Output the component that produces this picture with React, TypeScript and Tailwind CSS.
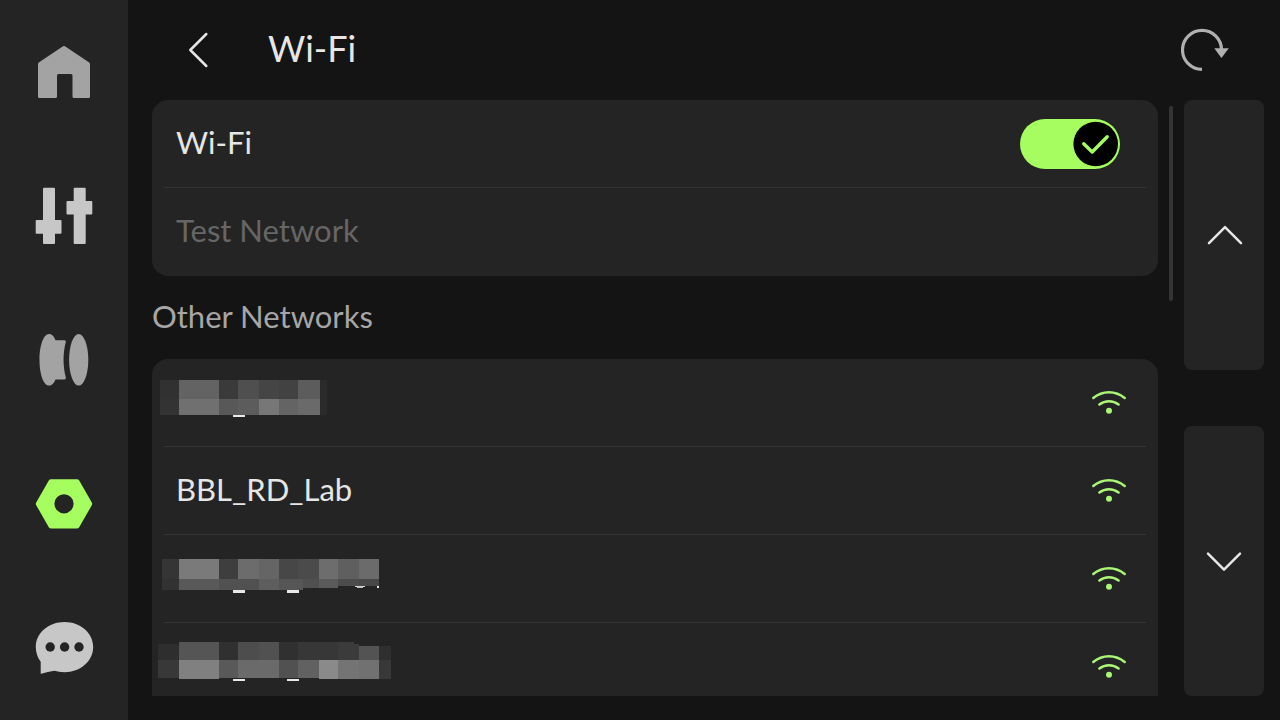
import { useState, type ReactNode } from "react";

type Block = [x: number, y: number, w: number, h: number, fill: string];

type Network = { id: string; name?: string; blocks?: Block[] };

const networks: Network[] = [
  {
    id: "n1",
    blocks: [
      [8, 21, 19, 19, "#313131"], [27, 21, 40, 19, "#636363"], [67, 21, 19, 19, "#3a3a3a"],
      [86, 21, 21, 19, "#4f4f4f"], [107, 21, 20, 19, "#454545"], [127, 21, 19, 19, "#424242"],
      [146, 21, 22, 19, "#5c5c5c"], [168, 21, 7, 35, "#2b2b2b"],
      [8, 40, 19, 16, "#333333"], [27, 40, 40, 16, "#707070"], [67, 40, 19, 16, "#585858"],
      [86, 40, 21, 16, "#5c5c5c"], [107, 40, 20, 16, "#777777"], [127, 40, 19, 16, "#646464"],
      [146, 40, 22, 16, "#6a6a6a"], [81, 56, 12, 2, "#e8e8e8"],
    ],
  },
  { id: "n2", name: "BBL_RD_Lab" },
  {
    id: "n3",
    blocks: [
      [10, 24, 17, 20, "#353535"], [27, 24, 40, 20, "#7a7a7a"], [67, 24, 19, 20, "#3e3e3e"],
      [86, 24, 21, 20, "#6c6c6c"], [107, 24, 20, 20, "#656565"], [127, 24, 19, 20, "#474747"],
      [146, 24, 21, 20, "#4b4b4b"], [167, 24, 19, 20, "#6d6d6d"], [186, 24, 21, 20, "#5f5f5f"],
      [207, 24, 20, 20, "#6b6b6b"],
      [10, 44, 17, 11, "#323232"], [27, 44, 40, 11, "#595959"], [67, 44, 40, 11, "#515151"],
      [107, 44, 20, 11, "#5e5e5e"], [127, 44, 24, 11, "#565656"], [151, 44, 16, 9, "#505050"],
      [167, 44, 19, 9, "#5a5a5a"], [186, 44, 21, 7, "#4c4c4c"], [207, 44, 20, 7, "#484848"],
      [81, 55, 12, 3, "#e8e8e8"], [135, 55, 12, 3, "#e8e8e8"], [203, 51, 10, 1, "#d6d6d6"],
      [205, 52, 6, 1, "#bdbdbd"], [225, 51, 2, 2, "#e8e8e8"],
    ],
  },
  {
    id: "n4",
    blocks: [
      [6, 21, 21, 16, "#2e2e2e"], [27, 19, 40, 18, "#555555"], [67, 19, 19, 18, "#303030"],
      [86, 19, 21, 18, "#4d4d4d"], [107, 19, 20, 18, "#515151"], [127, 19, 19, 18, "#303030"],
      [146, 19, 40, 18, "#373737"], [186, 19, 16, 18, "#3b3b3b"], [202, 21, 5, 16, "#3b3b3b"],
      [207, 23, 20, 14, "#535353"], [227, 23, 12, 14, "#2f2f2f"],
      [6, 37, 21, 18, "#383838"], [27, 37, 40, 19, "#808080"], [67, 37, 19, 18, "#595959"],
      [86, 37, 41, 18, "#6a6a6a"], [127, 37, 19, 18, "#515151"], [146, 37, 21, 18, "#616161"],
      [167, 37, 19, 19, "#8a8a8a"], [186, 37, 21, 19, "#747474"], [207, 37, 20, 19, "#717171"],
      [227, 37, 12, 19, "#383838"],
      [81, 56, 12, 2, "#e8e8e8"], [135, 56, 12, 2, "#e8e8e8"],
    ],
  },
];

function HomeIcon() {
  return (
    <svg className="size-16" viewBox="0 0 64 64" fill="#a3a3a3" aria-hidden="true">
      <path d="M31 6.2a2 2 0 0 1 2 0L57.200 22.600Q58 23.200 58 24.500V56.500a1.500 1.500 0 0 1-1.500 1.500H42a1.500 1.500 0 0 1-1.500-1.500V35.500a1.500 1.500 0 0 0-1.500-1.500H26.500a1.500 1.500 0 0 0-1.500 1.500V56.500a1.500 1.500 0 0 1-1.500 1.500H7.500a1.500 1.500 0 0 1-1.500-1.500V24.500Q6 23.200 6.800 22.600Z" />
    </svg>
  );
}

function SlidersIcon() {
  return (
    <svg className="size-16" viewBox="0 0 64 64" fill="#c7c7c7" aria-hidden="true">
      <rect x="11" y="3.800" width="12" height="56.200" rx="1" />
      <rect x="3.700" y="36" width="25.800" height="13.800" rx="1" />
      <rect x="41.700" y="3.800" width="12" height="56.200" rx="1" />
      <rect x="34.500" y="17" width="25.800" height="13.500" rx="1" />
    </svg>
  );
}

function SpoolIcon() {
  return (
    <svg className="size-16" viewBox="0 0 64 64" fill="#a3a3a3" aria-hidden="true">
      <ellipse cx="46.700" cy="31.800" rx="9.600" ry="25.800" />
      <path d="M17 6C20 6 22 8.500 23.500 12.200H32.500Q34.300 12.200 33.800 14C30.800 25 30.800 38.500 33.800 49.500Q34.300 51.500 32.500 51.500H23.500C22 55 20 57.600 17 57.600C11.500 57.600 7.500 46 7.500 31.800S11.500 6 17 6Z" />
    </svg>
  );
}

function SettingsIcon() {
  return (
    <svg className="size-16" viewBox="0 0 64 64" fill="#a5fd60" aria-hidden="true">
      <path
        fillRule="evenodd"
        d="M19 7.200H45Q46.400 7.200 47.200 8.500L59.800 30.500Q60.600 31.800 59.800 33.200L47.200 55.200Q46.400 56.500 45 56.500H19Q17.600 56.500 16.800 55.200L4.200 33.200Q3.400 31.800 4.200 30.500L16.800 8.500Q17.600 7.200 19 7.200ZM32 22.200a9.600 9.600 0 1 0 0 19.200a9.600 9.600 0 1 0 0-19.200Z"
      />
    </svg>
  );
}

function ChatIcon() {
  return (
    <svg className="size-16" viewBox="0 0 64 64" aria-hidden="true">
      <path
        fill="#c7c7c7"
        d="M32.500 6C48.500 6 61.200 17 61.200 31C61.200 45 48.500 56.200 32.500 56.200C28.500 56.200 25.500 55.600 22.500 54.800C18 55.400 13.500 56.500 9.200 57.700Q8.700 57.800 8.700 57.200V45.800C5.500 41.500 3.800 36.500 3.800 31C3.800 17 16.500 6 32.500 6Z"
      />
      <g fill="#242424">
        <circle cx="18.200" cy="31" r="4.700" />
        <circle cx="32.600" cy="31" r="4.700" />
        <circle cx="47" cy="31" r="4.700" />
      </g>
    </svg>
  );
}

function RefreshIcon() {
  return (
    <svg className="h-12 w-12" viewBox="0 0 48 48" aria-hidden="true">
      <path d="M21 43.400A19.500 19.500 0 1 1 40.500 24" fill="none" stroke="#b0b0b0" strokeWidth="3.200" />
      <path d="M33.300 22.300H47.800L40.800 31.600Q40.400 32 40 31.600Z" fill="#b0b0b0" />
    </svg>
  );
}

function WifiIcon() {
  return (
    <svg className="h-8 w-9" viewBox="0 0 36 32" fill="none" stroke="#aaf577" strokeWidth="2.500" strokeLinecap="round" aria-hidden="true">
      <path d="M2.300 11C11.500 3.200 24.500 3.200 33.700 11" />
      <path d="M8.400 17.500C14 13 22 13 27.600 17.500" />
      <circle cx="18" cy="23.800" r="3" fill="#aaf577" stroke="none" />
    </svg>
  );
}

function Mosaic({ blocks }: { blocks: Block[] }) {
  return (
    <svg className="-ml-3 h-[88px] w-[250px]" viewBox="0 0 250 88" shapeRendering="crispEdges" aria-hidden="true">
      {blocks.map(([x, y, w, h, fill]) => (
        <rect key={`${x}-${y}`} x={x} y={y} width={w} height={h} fill={fill} />
      ))}
    </svg>
  );
}

const navItems: { label: string; icon: ReactNode }[] = [
  { label: "Home", icon: <HomeIcon /> },
  { label: "Controls", icon: <SlidersIcon /> },
  { label: "Filament", icon: <SpoolIcon /> },
  { label: "Settings", icon: <SettingsIcon /> },
  { label: "Messages", icon: <ChatIcon /> },
];

export default function App() {
  const [enabled, setEnabled] = useState(true);

  return (
    <div className="flex h-screen bg-[#141414] font-['Lato','Noto_Sans',sans-serif] text-[31px] leading-10 text-[#e6e6e6]">
      <nav className="flex w-32 shrink-0 flex-col bg-[#242424]">
        {navItems.map((item) => (
          <button key={item.label} type="button" aria-label={item.label} className="flex flex-1 items-center justify-center">
            {item.icon}
          </button>
        ))}
      </nav>

      <main className="flex min-w-0 flex-1 flex-col">
        <header className="flex h-[100px] shrink-0 items-center pr-[51px] pl-12">
          <button type="button" aria-label="Back" className="flex size-12 items-center justify-center">
            <svg className="h-10 w-6" viewBox="0 0 24 40" fill="none" stroke="#e6e6e6" strokeWidth="2.500" strokeLinecap="round" strokeLinejoin="round" aria-hidden="true">
              <path d="M18.300 4L2.300 20L18.300 36" />
            </svg>
          </button>
          <h1 className="ml-11 flex-1 pb-1 text-4xl">Wi-Fi</h1>
          <button type="button" aria-label="Refresh">
            <RefreshIcon />
          </button>
        </header>

        <div className="flex min-h-0 flex-1 pr-4 pb-6 pl-6">
          <div className="min-w-0 flex-1 overflow-hidden">
            <section className="rounded-2xl bg-[#242424] px-3">
              <div className="flex h-[88px] items-center justify-between border-b border-[#343434] pr-[26px] pl-3">
                <label htmlFor="wifi-toggle" className="pb-1">Wi-Fi</label>
                <div className="relative h-[50px] w-[100px]">
                  <input
                    id="wifi-toggle"
                    type="checkbox"
                    role="switch"
                    checked={enabled}
                    onChange={(e) => setEnabled(e.target.checked)}
                    className="peer block h-full w-full cursor-pointer appearance-none rounded-full bg-[#4a4a4a] checked:bg-[#a5fd60]"
                  />
                  <svg
                    className="pointer-events-none absolute top-0.5 left-0.5 size-[46px] peer-checked:right-px peer-checked:left-auto"
                    viewBox="0 0 46 46"
                    aria-hidden="true"
                  >
                    <circle cx="22.700" cy="23" r="22.300" fill="#000000" />
                    {enabled && (
                      <path d="M10.700 22.800L19.200 31L34.200 15.800" fill="none" stroke="#a5fd60" strokeWidth="3.400" strokeLinecap="round" strokeLinejoin="round" />
                    )}
                  </svg>
                </div>
              </div>
              <button type="button" disabled className="flex h-[88px] w-full items-center pb-1 pl-3 text-[#666666]">
                Test Network
              </button>
            </section>

            <h2 className="flex h-[83px] items-center pb-1 text-[#a6a6a6]">Other Networks</h2>

            <ul className="divide-y divide-[#343434] rounded-t-2xl bg-[#242424] px-3">
              {networks.map((network) => (
                <li key={network.id} className="h-[88px]">
                  <button
                    type="button"
                    aria-label={network.name ?? "Private network"}
                    className="flex h-full w-full items-center justify-between pr-[19px]"
                  >
                    {network.blocks ? <Mosaic blocks={network.blocks} /> : <span className="pb-1 pl-3">{network.name}</span>}
                    <WifiIcon />
                  </button>
                </li>
              ))}
            </ul>
          </div>

          <div className="flex w-[26px] shrink-0 justify-center pt-1.5">
            <div className="h-[33%] w-1 rounded-full bg-[#343434]" />
          </div>

          <div className="flex w-20 shrink-0 flex-col gap-14">
            <button type="button" aria-label="Scroll up" className="flex flex-1 items-center justify-center rounded-lg bg-[#242424]">
              <svg className="h-6 w-10" viewBox="0 0 40 24" fill="none" stroke="#e6e6e6" strokeWidth="2.500" strokeLinecap="round" strokeLinejoin="round" aria-hidden="true">
                <path d="M5 20.200L21 4.200L37 20.200" />
              </svg>
            </button>
            <button type="button" aria-label="Scroll down" className="flex flex-1 items-center justify-center rounded-lg bg-[#242424]">
              <svg className="h-6 w-10" viewBox="0 0 40 24" fill="none" stroke="#e6e6e6" strokeWidth="2.500" strokeLinecap="round" strokeLinejoin="round" aria-hidden="true">
                <path d="M4 4.700L20 20.700L36 4.700" />
              </svg>
            </button>
          </div>
        </div>
      </main>
    </div>
  );
}
